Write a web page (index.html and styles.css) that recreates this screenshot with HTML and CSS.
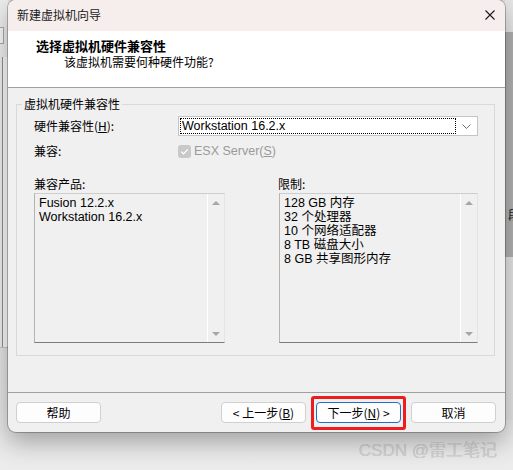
FILE: index.html
```html
<!DOCTYPE html>
<html lang="zh-CN">
<head>
<meta charset="utf-8">
<title>新建虚拟机向导</title>
<link rel="stylesheet" href="styles.css">
</head>
<body>
<div class="desk">
  <div class="bg-left"><div class="bg-left-box"></div><div class="bg-left-line"></div></div>
  <div class="bg-right"><span class="bg-right-text">段</span></div>

  <div class="dialog">
    <div class="titlebar">
      <span class="title">新建虚拟机向导</span>
      <svg class="close" width="10" height="10" viewBox="0 0 10 10"><path d="M0.5 0.5 L9.5 9.5 M9.5 0.5 L0.5 9.5" stroke="#1a1a1a" stroke-width="1.1" fill="none"/></svg>
    </div>

    <div class="header">
      <div class="h-title">选择虚拟机硬件兼容性</div>
      <div class="h-sub">该虚拟机需要何种硬件功能?</div>
    </div>

    <div class="content">
      <fieldset class="group">
        <legend class="legend">虚拟机硬件兼容性</legend>

        <div class="row row-hw">
          <span class="label">硬件兼容性(<u>H</u>):</span>
          <div class="combo">
            <span class="combo-focus">Workstation 16.2.x</span>
            <svg class="chev" width="9" height="5" viewBox="0 0 9 5"><path d="M0.5 0.5 L4.5 4.5 L8.5 0.5" stroke="#6a6a6a" stroke-width="1" fill="none"/></svg>
          </div>
        </div>

        <div class="row row-compat">
          <span class="label">兼容:</span>
          <span class="check"><svg width="13" height="13" viewBox="0 0 13 13"><path d="M3.2 6.6 L5.5 8.9 L9.8 4.4" stroke="#ffffff" stroke-width="1.3" fill="none"/></svg></span>
          <span class="disabled">ESX Server(<u>S</u>)</span>
        </div>

        <div class="lists">
          <div class="col">
            <div class="list-label">兼容产品:</div>
            <div class="list">
              <div class="items">
                <div>Fusion 12.2.x</div>
                <div>Workstation 16.2.x</div>
              </div>
              <div class="scroll"><span class="arr-up"></span><span class="arr-down"></span></div>
            </div>
          </div>
          <div class="col">
            <div class="list-label">限制:</div>
            <div class="list list-right">
              <div class="items">
                <div>128 GB 内存</div>
                <div>32 个处理器</div>
                <div>10 个网络适配器</div>
                <div>8 TB 磁盘大小</div>
                <div>8 GB 共享图形内存</div>
              </div>
              <div class="scroll"><span class="arr-up"></span><span class="arr-down"></span></div>
            </div>
          </div>
        </div>
      </fieldset>
    </div>

    <div class="footer">
      <button class="btn">帮助</button>
      <div class="nav">
        <button class="btn">&lt; 上一步(<u>B</u>)</button>
        <button class="btn btn-next">下一步(<u>N</u>) &gt;</button>
        <button class="btn">取消</button>
      </div>
    </div>
  </div>

  <div class="watermark">CSDN @雷工笔记</div>
</div>
</body>
</html>
```

FILE: styles.css
```css
* { box-sizing: border-box; }

html, body {
  margin: 0;
  padding: 0;
}

body {
  font-family: "Liberation Sans", "Noto Sans CJK SC", sans-serif;
  font-size: 12px;
  color: #000;
  background: #e9e9e9;
}

.desk {
  position: relative;
  width: 513px;
  height: 470px;
  overflow: hidden;
  background: linear-gradient(to bottom, #dcdcdc 0, #e4e4e4 400px, #ececec 470px);
}

/* windows behind the dialog */
.bg-left {
  position: absolute;
  left: 0;
  top: 0;
  width: 8px;
  height: 348px;
  background: #ececec;
  border-bottom: 1px solid #c4c4c4;
}
.bg-left-box {
  position: absolute;
  left: 0;
  top: 27px;
  width: 4px;
  height: 17px;
  border: 1px solid #a8a8a8;
  border-left: 0;
  background: #f6f6f6;
}
.bg-left-line {
  position: absolute;
  left: 2px;
  top: 57px;
  width: 6px;
  height: 290px;
  border-left: 1px solid #8e8e8e;
  background: #f7f7f7;
}

.bg-right {
  position: absolute;
  left: 505px;
  top: 0;
  width: 8px;
  height: 420px;
  overflow: hidden;
  background: linear-gradient(to bottom, #e6e6e6 0 32px, #b0b0b0 32px 257px, #e2e2e2 257px);
}
.bg-right-text {
  position: absolute;
  left: 3px;
  top: 207px;
  font-family: "Noto Sans CJK SC", sans-serif;
  font-size: 12px;
  line-height: 16px;
  color: #222;
}

/* dialog */
.dialog {
  position: relative;
  margin-left: 8px;
  width: 497px;
  height: 432px;
  border-radius: 8px;
  overflow: hidden;
  background: #f0f0f0;
  box-shadow: 0 0 0 1px rgba(0, 0, 0, 0.25), 0 10px 24px rgba(0, 0, 0, 0.3);
  display: flex;
  flex-direction: column;
}

.titlebar {
  height: 31px;
  flex: none;
  background: #f6eeed;
  display: flex;
  align-items: center;
  justify-content: space-between;
  padding: 0 10px 1px 9px;
}
.title {
  font-family: "Noto Sans CJK SC", sans-serif;
  font-size: 12px;
  line-height: 16px;
  color: #1a1a1a;
}
.close { display: block; }

.header {
  height: 57px;
  flex: none;
  background: #ffffff;
  border-bottom: 1px solid #a0a0a0;
  padding-top: 7px;
}
.h-title {
  padding-left: 28px;
  font-family: "Noto Sans CJK SC", sans-serif;
  font-weight: bold;
  font-size: 13px;
  line-height: 16px;
  color: #000;
}
.h-sub {
  padding-left: 56px;
  font-family: "Noto Sans CJK SC", sans-serif;
  font-size: 12px;
  line-height: 16px;
  color: #000;
}

.content {
  height: 305px;
  flex: none;
  border-bottom: 1px solid #a0a0a0;
  padding: 8px 10px 0 8px;
}

.group {
  margin: 0;
  border: 1px solid #d9d9d9;
  padding: 4px 0 12px 17px;
  min-width: 0;
}
.legend {
  margin-left: -12px;
  padding: 0 2px;
  font-family: "Noto Sans CJK SC", sans-serif;
  font-size: 12px;
  line-height: 16px;
}

.row {
  display: flex;
  align-items: center;
}
.label {
  width: 144px;
  flex: none;
  font-family: "Noto Sans CJK SC", sans-serif;
  line-height: 16px;
}
.row-hw { height: 20px; }
.row-compat { height: 16px; margin-top: 7px; }

.combo {
  width: 300px;
  height: 20px;
  border: 1px solid #c4c4c4;
  background: #ffffff;
  display: flex;
  align-items: center;
  padding: 0 6px 0 1px;
}
.combo-focus {
  width: 279px;
  height: 16px;
  border: 1px dotted #000;
  padding-left: 1px;
  line-height: 14px;
  font-size: 12.5px;
}
.chev { margin-left: 6px; display: block; }

.check {
  width: 13px;
  height: 13px;
  border-radius: 3px;
  background: #c9c9c9;
  margin-right: 3px;
  display: block;
}
.check svg { display: block; }
.disabled {
  color: #9a9a9a;
  line-height: 16px;
  font-size: 12.5px;
}

.lists {
  margin-top: 17px;
  display: grid;
  grid-template-columns: 191px 200px;
  column-gap: 53px;
}
.list-label {
  font-family: "Noto Sans CJK SC", sans-serif;
  line-height: 16px;
  margin-bottom: 1px;
}
.list {
  height: 150px;
  display: flex;
  border-style: solid;
  border-width: 1px;
  border-color: #cdcdcd #e4e4e4 #7c7c7c #b4b4b4;
  background: #f0f0f0;
}
.list-right { margin-left: 1px; }
.items {
  flex: 1;
  padding: 2px 0 0 4px;
  line-height: 14px;
  font-size: 12.5px;
}
.scroll {
  width: 17px;
  flex: none;
  border-left: 1px solid #ffffff;
  display: flex;
  flex-direction: column;
  justify-content: space-between;
  align-items: center;
  padding: 7px 0 6px;
}
.arr-up, .arr-down {
  width: 0;
  height: 0;
  border-left: 4px solid transparent;
  border-right: 4px solid transparent;
}
.arr-up { border-bottom: 4px solid #a6a6a6; }
.arr-down { border-top: 4px solid #a6a6a6; }

.footer {
  flex: 1;
  display: flex;
  justify-content: space-between;
  padding: 9px 9px 0 8px;
}
.nav {
  display: flex;
  gap: 10px;
}
.btn {
  position: relative;
  width: 85px;
  height: 21px;
  padding: 0;
  margin: 0;
  background: #fdfdfd;
  border: 1px solid #d0d0d0;
  border-radius: 4px;
  font-family: "Noto Sans CJK SC", sans-serif;
  font-size: 12px;
  line-height: 17px;
  color: #000;
}
.btn-next {
  border-color: #1f6fc5;
}
.btn-next::after {
  content: "";
  position: absolute;
  left: -6px;
  right: -6px;
  top: -7px;
  bottom: -8px;
  border: 3px solid #ee1d1d;
  border-radius: 3px;
}

.watermark {
  margin-top: 9px;
  padding-right: 16px;
  text-align: right;
  font-family: "Liberation Sans", "Noto Sans CJK SC", sans-serif;
  font-size: 17px;
  font-weight: normal;
  line-height: 20px;
  color: #d4d4d4;
  text-shadow: 0 0 0.6px #b4b4b4;
}
```
